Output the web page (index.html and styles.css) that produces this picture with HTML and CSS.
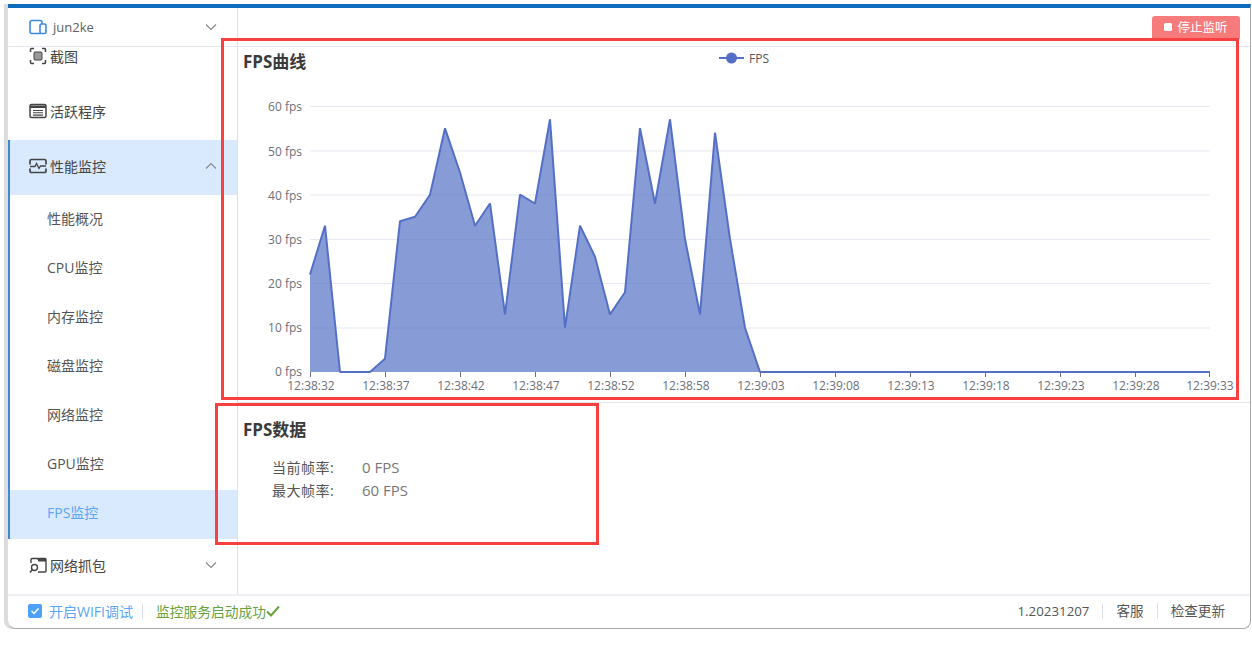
FILE: index.html
```html
<!DOCTYPE html>
<html lang="zh-CN">
<head>
<meta charset="utf-8">
<title>FPS监控</title>
<link rel="stylesheet" href="styles.css">
</head>
<body>
<div class="window">
  <div class="panes">
    <aside class="sidebar">
      <div class="device">
        <svg class="ico" viewBox="0 0 18 18" width="18" height="18"><rect x="1" y="2.5" width="12" height="13" rx="2" fill="none" stroke="#3b8ae0" stroke-width="1.6"/><rect x="11" y="6" width="6" height="9.5" rx="1.5" fill="#fff" stroke="#3b8ae0" stroke-width="1.6"/></svg>
        <span class="device-name">jun2ke</span>
        <svg class="chev" viewBox="0 0 12 8" width="12" height="8"><path d="M1 1.5 6 6.5 11 1.5" fill="none" stroke="#888" stroke-width="1.1"/></svg>
      </div>
      <nav class="menu-clip">
        <ul class="menu">
          <li class="row"><svg class="ico" viewBox="0 0 18 18" width="18" height="18"><path d="M1.5 5V2.500a1 1 0 0 1 1-1H5M13 1.500h2.500a1 1 0 0 1 1 1V5M16.500 13v2.500a1 1 0 0 1-1 1H13M5 16.500H2.500a1 1 0 0 1-1-1V13" fill="none" stroke="#444" stroke-width="1.500"/><rect x="5" y="5" width="8" height="8" rx="1" fill="#999" stroke="#444"/></svg>截图</li>
          <li class="row"><svg class="ico" viewBox="0 0 18 18" width="18" height="18"><rect x="1" y="2.500" width="16" height="13" rx="1.500" fill="none" stroke="#444" stroke-width="1.500"/><path d="M1 3.500h16v2.500H1z" fill="#444"/><path d="M4 8.500h10M4 10.800h10M4 13.100h10" stroke="#444" stroke-width="1.100"/></svg>活跃程序</li>
          <li class="row parent"><svg class="ico" viewBox="0 0 18 18" width="18" height="18"><path d="M1 7.500V4a1.500 1.500 0 0 1 1.500-1.500h13A1.500 1.500 0 0 1 17 4v3.500M1 11.500V14a1.500 1.500 0 0 0 1.500 1.500h13A1.500 1.500 0 0 0 17 14v-2.500" fill="none" stroke="#444" stroke-width="1.700"/><path d="M1 9.500h5l1.500-3 2.500 5 1.500-2.500h5.500" fill="none" stroke="#444" stroke-width="1.300"/></svg>性能监控<svg class="chev" viewBox="0 0 12 8" width="12" height="8"><path d="M1 6.500 6 1.500 11 6.500" fill="none" stroke="#888" stroke-width="1.100"/></svg></li>
          <li>
            <ul class="submenu">
              <li class="sub">性能概况</li>
              <li class="sub">CPU监控</li>
              <li class="sub">内存监控</li>
              <li class="sub">磁盘监控</li>
              <li class="sub">网络监控</li>
              <li class="sub">GPU监控</li>
              <li class="sub active">FPS监控</li>
            </ul>
          </li>
          <li class="row"><svg class="ico" viewBox="0 0 18 18" width="18" height="18"><path d="M2 7V3.500A1 1 0 0 1 3 2.500h13a1 1 0 0 1 1 1V15a1 1 0 0 1-1 1H9" fill="none" stroke="#444" stroke-width="1.400"/><path d="M8 2.500h9v3H9.500z" fill="#444"/><circle cx="5.500" cy="11.500" r="3" fill="none" stroke="#444" stroke-width="1.400"/><path d="M3.300 13.700 1 16.500" stroke="#444" stroke-width="1.500"/></svg>网络抓包<svg class="chev" viewBox="0 0 12 8" width="12" height="8"><path d="M1 1.500 6 6.500 11 1.500" fill="none" stroke="#888" stroke-width="1.100"/></svg></li>
        </ul>
      </nav>
    </aside>
    <main class="content">
      <div class="toolbar">
        <button class="stop"><span class="stop-mark"></span>停止监听</button>
      </div>
      <section class="chart-panel">
        <header class="chart-head">
          <h2 class="title">FPS曲线</h2>
          <div class="legend">
            <svg viewBox="0 0 25 14" width="25" height="14"><path d="M0 7h25" stroke="#5470c6" stroke-width="2"/><circle cx="12.500" cy="7" r="5.500" fill="#5470c6"/></svg>
            <span>FPS</span>
          </div>
        </header>
        <svg class="chart" viewBox="238 76 1012 326" width="1012" height="326">
          <g class="grid">
            <path d="M310 106.500H1210M310 151H1210M310 195H1210M310 239.500H1210M310 283.500H1210M310 328H1210"/>
          </g>
          <g class="ylabels">
            <text x="302" y="111">60 fps</text>
            <text x="302" y="156">50 fps</text>
            <text x="302" y="200">40 fps</text>
            <text x="302" y="244">30 fps</text>
            <text x="302" y="288">20 fps</text>
            <text x="302" y="332">10 fps</text>
            <text x="302" y="376">0 fps</text>
          </g>
          <path class="area" d="M310 372V274.500L325 225.700 340 372H370L385 358.700 400 221.300 415 216.800 430 194.700 445 128.200 460 172.500 475 225.700 490 203.500 505 314.400 520 194.700 535 203.500 550 119.300 565 327.700 580 225.700 595 256.700 610 314.400 625 292.200 640 128.200 655 203.500 670 119.300 685 239 700 314.400 715 132.600 730 239 745 327.700 760 372H1210Z"/>
          <path class="line" d="M310 274.500L325 225.700 340 372H370L385 358.700 400 221.300 415 216.800 430 194.700 445 128.200 460 172.500 475 225.700 490 203.500 505 314.400 520 194.700 535 203.500 550 119.300 565 327.700 580 225.700 595 256.700 610 314.400 625 292.200 640 128.200 655 203.500 670 119.300 685 239 700 314.400 715 132.600 730 239 745 327.700 760 372H1210"/>
          <path class="ticks" d="M310.500 372v5M385.500 372v5M460.500 372v5M535.500 372v5M610.500 372v5M685.500 372v5M760.500 372v5M835.500 372v5M910.500 372v5M985.500 372v5M1060.500 372v5M1135.500 372v5M1209.500 372v5"/>
          <g class="xlabels">
            <text x="311" y="390">12:38:32</text>
            <text x="386" y="390">12:38:37</text>
            <text x="461" y="390">12:38:42</text>
            <text x="536" y="390">12:38:47</text>
            <text x="611" y="390">12:38:52</text>
            <text x="686" y="390">12:38:58</text>
            <text x="761" y="390">12:39:03</text>
            <text x="836" y="390">12:39:08</text>
            <text x="911" y="390">12:39:13</text>
            <text x="986" y="390">12:39:18</text>
            <text x="1061" y="390">12:39:23</text>
            <text x="1136" y="390">12:39:28</text>
            <text x="1210" y="390">12:39:33</text>
          </g>
        </svg>
      </section>
      <section class="data-panel">
        <h2 class="title">FPS数据</h2>
        <dl class="stats">
          <div class="stat"><dt>当前帧率:</dt><dd>0 FPS</dd></div>
          <div class="stat"><dt>最大帧率:</dt><dd>60 FPS</dd></div>
        </dl>
      </section>
    </main>
  </div>
  <footer class="statusbar">
    <label class="wifi"><span class="checkbox"><svg viewBox="0 0 14 14" width="14" height="14"><path d="M3.500 7 6 9.500 10.500 4.500" fill="none" stroke="#fff" stroke-width="1.500"/></svg></span>开启WIFI调试</label>
    <span class="ok">监控服务启动成功<svg viewBox="0 0 14 12" width="14" height="12"><path d="M1 6.500 5 10.500 13 1.500" fill="none" stroke="#67a23c" stroke-width="2"/></svg></span>
    <span class="meta version">1.20231207</span>
    <span class="meta">客服</span>
    <span class="meta">检查更新</span>
  </footer>
  <div class="mark mark-chart"></div>
  <div class="mark mark-data"></div>
</div>
</body>
</html>
```
FILE: styles.css
```css
* { box-sizing: border-box; }
html, body { height: 100%; }
body {
  margin: 0;
  padding: 4px 1px 0 8px;
  background: #fff;
  font-family: "Open Sans", "Noto Sans CJK SC", sans-serif;
  font-size: 14px;
  color: #444;
  overflow: hidden;
}
ul { list-style: none; margin: 0; padding: 0; }
.window {
  position: relative;
  height: 625px;
  display: flex;
  flex-direction: column;
  background: #fff;
  border-top: 4px solid #0f6cbd;
  border-right: 1px solid #a8a8a8;
  border-bottom: 1px solid #a8a8a8;
  border-radius: 0 0 8px 8px;
  box-shadow: -4px 0 0 #dcdcdc;
}
.panes { flex: 1; display: flex; min-height: 0; }
.sidebar {
  width: 230px;
  flex: none;
  display: flex;
  flex-direction: column;
  border-right: 1px solid #dcdfe6;
}
.device {
  height: 39px;
  flex: none;
  display: flex;
  align-items: center;
  padding: 0 20px 0 21px;
  border-bottom: 1px solid #e6e6ef;
  color: #606266;
}
.device-name { margin-left: 3px; flex: 1; font-size: 13px; }
.ico { flex: none; margin-right: 3px; }
.chev { margin-left: auto; flex: none; }
.menu-clip { flex: 1; overflow: hidden; min-height: 0; }
.menu { margin-top: -17px; }
.row {
  height: 55px;
  display: flex;
  align-items: center;
  padding: 0 20px 4px 21px;
  color: #444;
}
.row.parent { background: #d9eaff; border-left: 2px solid #3f88d8; padding-left: 19px; }
.submenu { padding-top: 1px; border-left: 2px solid #3f88d8; }
.sub {
  height: 49px;
  display: flex;
  align-items: center;
  padding: 0 0 6px 37px;
  color: #555;
}
.sub.active { background: #d9eaff; color: #5aa5f5; }
.content { flex: 1; min-width: 0; display: flex; flex-direction: column; }
.toolbar {
  height: 39px;
  flex: none;
  display: flex;
  justify-content: flex-end;
  align-items: flex-start;
  padding: 8px 10px 0 0;
  border-bottom: 1px solid #e6e6ef;
}
.stop {
  width: 88px;
  height: 24px;
  border: 0;
  border-radius: 3px;
  background: #f87b7b;
  color: #fff;
  font: inherit;
  font-size: 12.500px;
  display: flex;
  align-items: center;
  justify-content: center;
  gap: 5px;
  padding: 0 0 3px;
}
.stop-mark { width: 8px; height: 8px; background: #fff; border-radius: 1.500px; }
.chart-panel { flex: none; border-bottom: 1px solid #e4e4e8; }
.chart-head {
  height: 29px;
  display: grid;
  grid-template-columns: 1fr auto 1fr;
  padding-left: 5px;
}
.title { margin: 0; font-size: 17px; line-height: 28px; font-weight: 700; color: #3a3a3a; }
.chart-head .title { padding-top: 1px; }
.legend {
  display: flex;
  align-items: center;
  gap: 5px;
  font-size: 12px;
  color: #555;
  height: 22px;
  margin-left: -5px;
}
.chart { display: block; }
.grid path { fill: none; stroke: #e6e9f4; stroke-width: 1; }
.ylabels text { font-size: 12px; fill: #6e7079; text-anchor: end; }
.xlabels text { font-size: 12px; fill: #6e7079; text-anchor: middle; }
.area { fill: #5470c6; fill-opacity: .7; }
.line { fill: none; stroke: #5470c6; stroke-width: 2; stroke-linejoin: bevel; }
.ticks { fill: none; stroke: #6e7079; stroke-width: 1; }
.data-panel { flex: 1; padding: 13px 5px 0; }
.stats { margin: 12px 0 0 29px; }
.stat { display: flex; height: 22.500px; align-items: center; }
.stat dt { width: 90px; color: #555; letter-spacing: .5px; }
.stat dd { margin: 0; font-size: 15px; color: #777; }
.statusbar {
  height: 34px;
  flex: none;
  display: flex;
  align-items: center;
  padding: 0 12px 3px 20px;
  border-top: 2px solid #efeff4;
  border-radius: 0 0 8px 8px;
}
.wifi {
  display: flex;
  align-items: center;
  padding-right: 9px;
  color: #5aa5f5;
  border-right: 1px solid #e0e0e6;
  height: 16px;
}
.checkbox {
  width: 14px;
  height: 14px;
  margin-right: 7px;
  border-radius: 2px;
  background: #4ea1fb;
  display: flex;
}
.ok { margin-left: 13px; margin-right: auto; color: #67a23c; font-size: 13.750px; display: flex; align-items: center; }
.meta {
  padding: 0 13px;
  border-left: 1px solid #e0e0e6;
  color: #555;
  font-size: 13.600px;
  line-height: 16px;
}
.version { border-left: 0; font-size: 13.300px; }
.mark { position: absolute; border: 3px solid #f94040; pointer-events: none; }
.mark-chart { left: 213px; top: 30px; width: 1018px; height: 362px; }
.mark-data { left: 207px; top: 395px; width: 384px; height: 142px; }
```
